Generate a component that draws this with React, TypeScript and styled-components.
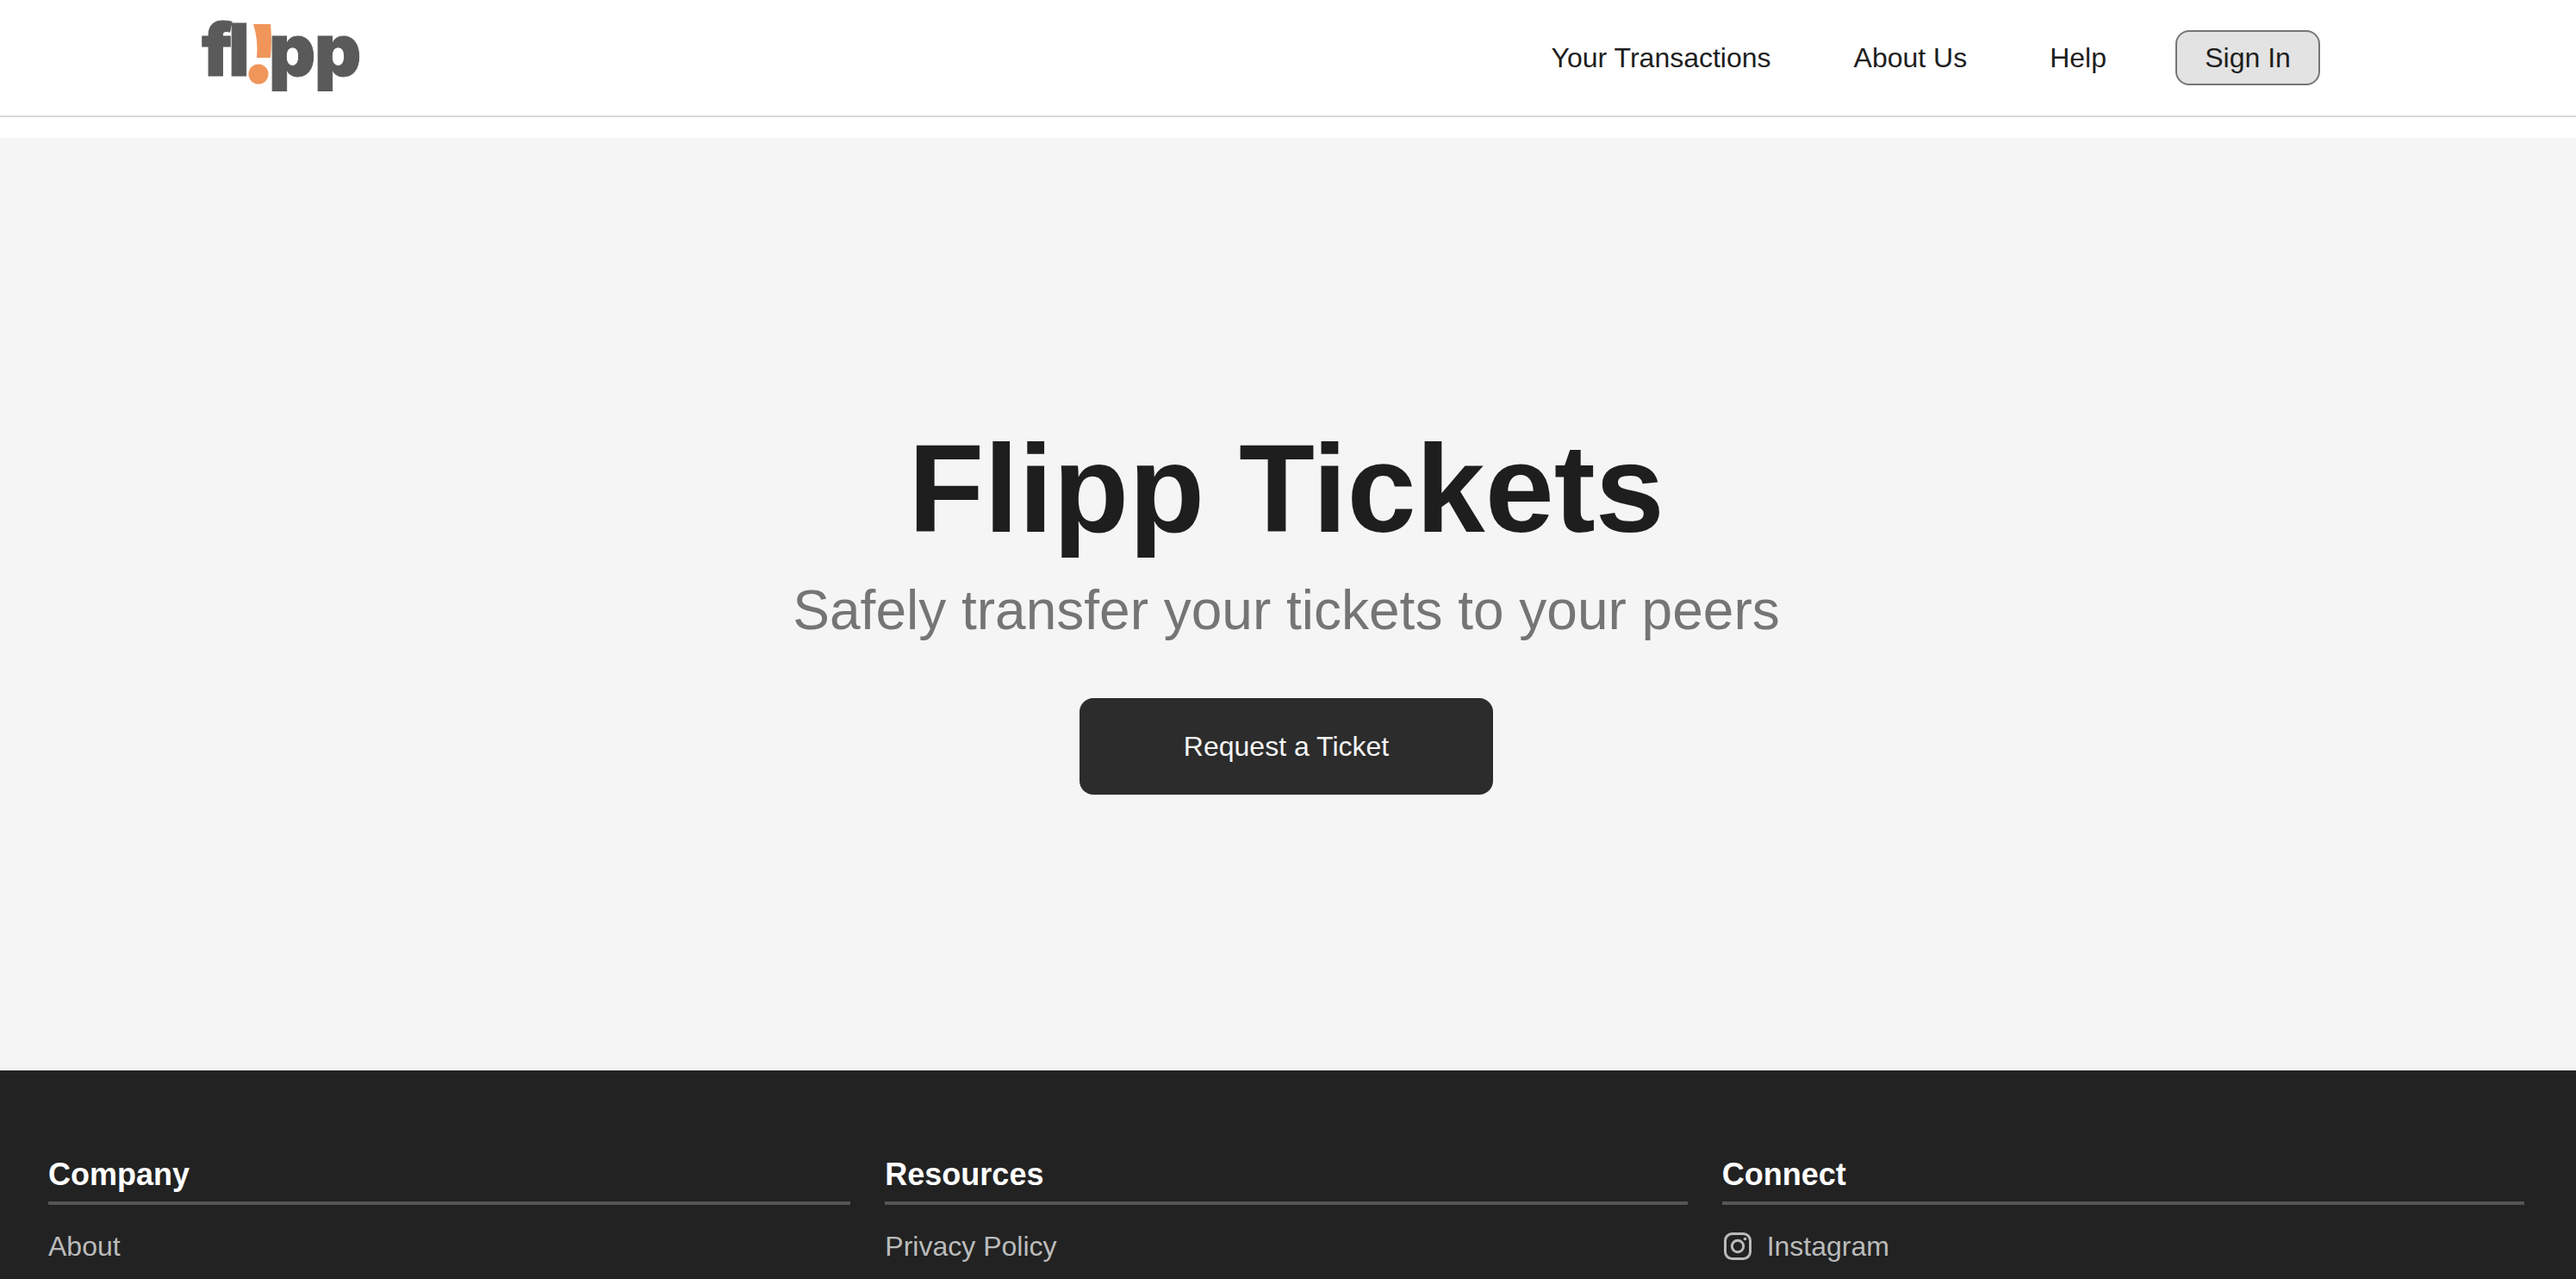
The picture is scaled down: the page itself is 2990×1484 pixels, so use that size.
import React from "react";
import styled, { createGlobalStyle } from "styled-components";

const GlobalStyle = createGlobalStyle`
  * { box-sizing: border-box; }
  body {
    margin: 0;
    background: #ffffff;
    color: #1e1e1e;
    font-family: "Liberation Sans", Helvetica, Arial, sans-serif;
    font-size: 32px;
    overflow: hidden;
  }
`;

const Page = styled.div`
  display: flex;
  flex-direction: column;
  height: 100vh;
`;

const Header = styled.header`
  display: flex;
  flex: none;
  align-items: center;
  justify-content: space-between;
  height: 136px;
  margin-bottom: 24px;
  padding: 0 297px 0 232px;
  border-bottom: 2px solid #d9d9d9;
`;

const LogoLink = styled.a`
  display: block;
  height: 134px;
`;

const Nav = styled.nav`
  display: flex;
  align-items: center;
  gap: 96px;
`;

const NavLink = styled.a`
  color: #1e1e1e;
  line-height: 40px;
  text-decoration: none;
`;

const SignIn = styled.button`
  width: 168px;
  height: 64px;
  margin-left: -16px;
  padding: 0;
  border: 2px solid #767676;
  border-radius: 16px;
  background: #e3e3e3;
  color: #1e1e1e;
  font: inherit;
`;

const Hero = styled.main`
  display: flex;
  flex: none;
  flex-direction: column;
  align-items: center;
  height: 1082px;
  padding: 322px 4px 0 0;
  background: #f5f5f5;
`;

const Title = styled.h1`
  margin: 0;
  font-size: 144px;
  font-weight: 700;
  line-height: 172px;
`;

const Subtitle = styled.p`
  margin: 16px 0 0;
  color: #757575;
  font-size: 64px;
  line-height: 76px;
`;

const RequestButton = styled.button`
  width: 480px;
  height: 112px;
  margin-top: 64px;
  border: 0;
  border-radius: 16px;
  background: #2c2c2c;
  color: #f5f5f5;
  font: inherit;
`;

const Footer = styled.footer`
  display: grid;
  flex: 1 0 auto;
  grid-template-columns: repeat(3, 1fr);
  align-items: start;
  gap: 40px;
  padding: 100px 60px 0 56px;
  background: #222222;
`;

const ColumnTitle = styled.h2`
  margin: 0 0 30px;
  padding-bottom: 10px;
  border-bottom: 4px solid #555555;
  color: #ffffff;
  font-size: 36px;
  font-weight: 700;
  line-height: 42px;
`;

const FooterLink = styled.a`
  display: flex;
  align-items: center;
  gap: 16px;
  color: #bbbbbb;
  line-height: 36px;
  text-decoration: none;
`;

function Logo() {
  return (
    <svg width="200" height="134" viewBox="0 0 200 134" role="img" aria-label="flipp">
      <g fill="#5a5a5a" stroke="#5a5a5a" strokeWidth="1" fontFamily="Inter, sans-serif" fontWeight="900" fontSize="84">
        <text x="2" y="88">f</text>
        <text x="33" y="88">l</text>
        <text x="80" y="88">p</text>
        <text x="133" y="88">p</text>
      </g>
      <path d="M62 28H82Q84 46 82 67H66Q68 46 62 28Z" fill="#f0965a" />
      <circle cx="68" cy="86" r="11.5" fill="#f0965a" />
    </svg>
  );
}

function InstagramIcon() {
  return (
    <svg width="36" height="36" viewBox="0 0 36 36" fill="none" stroke="currentColor" strokeWidth="3" aria-hidden="true">
      <rect x="3.5" y="3.5" width="29" height="29" rx="8" />
      <circle cx="18" cy="18" r="6.7" />
      <circle cx="26.5" cy="9.5" r="1.8" fill="currentColor" stroke="none" />
    </svg>
  );
}

const navItems = ["Your Transactions", "About Us", "Help"];

const columns = [
  { title: "Company", link: "About", icon: null },
  { title: "Resources", link: "Privacy Policy", icon: null },
  { title: "Connect", link: "Instagram", icon: <InstagramIcon /> },
];

export default function App() {
  return (
    <>
      <GlobalStyle />
      <Page>
        <Header>
          <LogoLink href="#">
            <Logo />
          </LogoLink>
          <Nav>
            {navItems.map((item) => (
              <NavLink key={item} href="#">{item}</NavLink>
            ))}
            <SignIn type="button">Sign In</SignIn>
          </Nav>
        </Header>
        <Hero>
          <Title>Flipp Tickets</Title>
          <Subtitle>Safely transfer your tickets to your peers</Subtitle>
          <RequestButton type="button">Request a Ticket</RequestButton>
        </Hero>
        <Footer>
          {columns.map(({ title, link, icon }) => (
            <section key={title}>
              <ColumnTitle>{title}</ColumnTitle>
              <FooterLink href="#">
                {icon}
                {link}
              </FooterLink>
            </section>
          ))}
        </Footer>
      </Page>
    </>
  );
}
